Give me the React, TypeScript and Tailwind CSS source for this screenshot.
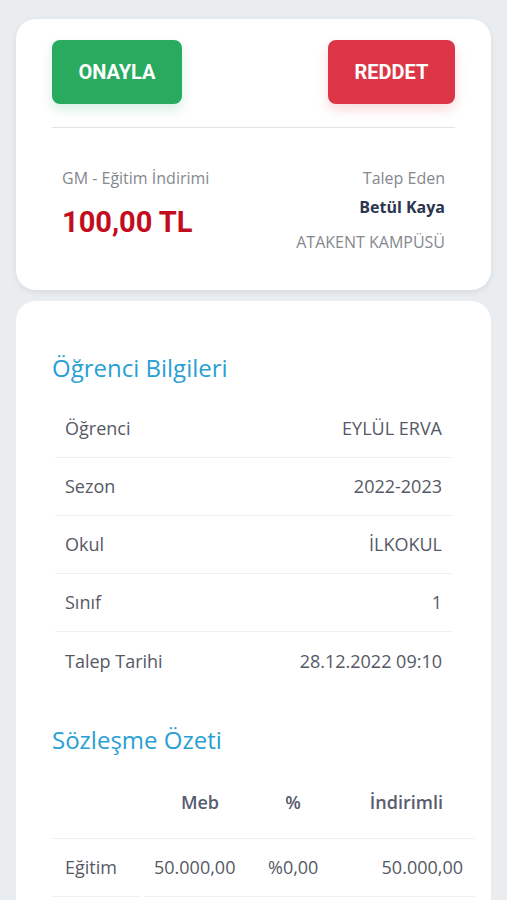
import React from "react";

const body = { fontFamily: '"Open Sans", "Noto Sans", sans-serif' };
const rob = { fontFamily: 'Roboto, "Noto Sans", sans-serif' };

const rows: [string, string][] = [
  ["Öğrenci", "EYLÜL ERVA"],
  ["Sezon", "2022-2023"],
  ["Okul", "İLKOKUL"],
  ["Sınıf", "1"],
  ["Talep Tarihi", "28.12.2022 09:10"],
];

export default function App() {
  return (
    <div className="min-h-[900px] w-full overflow-hidden bg-[#e9edf0] pt-[19px]" style={body}>
      <div className="mx-4 rounded-[20px] bg-white px-9 pb-[38px] pt-[21px] shadow-[0_2px_6px_rgba(0,0,0,0.08)]">
        <div className="flex items-center justify-between">
          <button
            className="h-16 w-[130px] rounded-lg bg-[#28ab5f] text-[20px] font-bold text-white shadow-[0_6px_12px_rgba(40,171,95,0.18)]"
            style={rob}
          >
            ONAYLA
          </button>
          <button
            className="h-16 w-[127px] rounded-lg bg-[#dc3545] text-[20px] font-bold text-white shadow-[0_6px_12px_rgba(220,53,69,0.18)]"
            style={rob}
          >
            REDDET
          </button>
        </div>
        <div className="mt-[23px] h-px bg-[#e2e4e7]" />
        <div className="flex justify-between px-[10px] pt-[40px]">
          <div>
            <div className="text-[16px] leading-[20px] text-[#85888e]">GM - Eğitim İndirimi</div>
            <div className="mt-[17px] text-[29px] font-bold leading-[34px] text-[#c20d1f]" style={rob}>
              100,00 TL
            </div>
          </div>
          <div className="text-right">
            <div className="text-[16px] leading-[20px] text-[#85888e]">Talep Eden</div>
            <div className="mt-[9px] text-[16px] font-bold leading-[20px] text-[#2a3550]">Betül Kaya</div>
            <div className="mt-[15px] text-[16px] leading-[20px] text-[#85888e]">ATAKENT KAMPÜSÜ</div>
          </div>
        </div>
      </div>

      <div className="mx-4 mt-[11px] rounded-t-[20px] bg-white px-9 pb-10 pt-[52px]">
        <div className="text-[24px] leading-[30px] text-[#2a9fd3]">Öğrenci Bilgileri</div>
        <div className="mx-[3px] mt-[17px]">
          {rows.map(([k, v], i) => (
            <div
              key={k}
              className={
                "flex h-[58px] items-center justify-between pl-[10px] pr-[10px] text-[18px] text-[#555965] " +
                (i < rows.length - 1 ? "border-b border-[#eeeff1]" : "")
              }
            >
              <span>{k}</span>
              <span>{v}</span>
            </div>
          ))}
        </div>

        <div className="mt-[35px] text-[24px] leading-[30px] text-[#2a9fd3]">Sözleşme Özeti</div>
        <div className="mt-3 w-[423px] text-[18px] text-[#555965]">
          <div className="flex h-[72px] items-center border-b border-[#eeeff1] font-semibold text-[#585c6e]">
            <div className="w-[92px]" />
            <div className="w-[112px] text-center">Meb</div>
            <div className="w-[74px] text-center">%</div>
            <div className="flex-1 pr-[32px] text-right">İndirimli</div>
          </div>
          <div className="flex h-[58px] items-center">
            <div className="flex h-full w-[88px] items-center border-b border-[#eeeff1] pl-[13px]">Eğitim</div>
            <div className="ml-1 flex h-full w-[112px] items-center border-b border-[#eeeff1] pl-[10px]">50.000,00</div>
            <div className="flex h-full w-[74px] items-center border-b border-[#eeeff1] pl-[12px]">%0,00</div>
            <div className="flex h-full flex-1 items-center justify-end border-b border-[#eeeff1] pr-[12px]">50.000,00</div>
          </div>
        </div>
      </div>
    </div>
  );
}
